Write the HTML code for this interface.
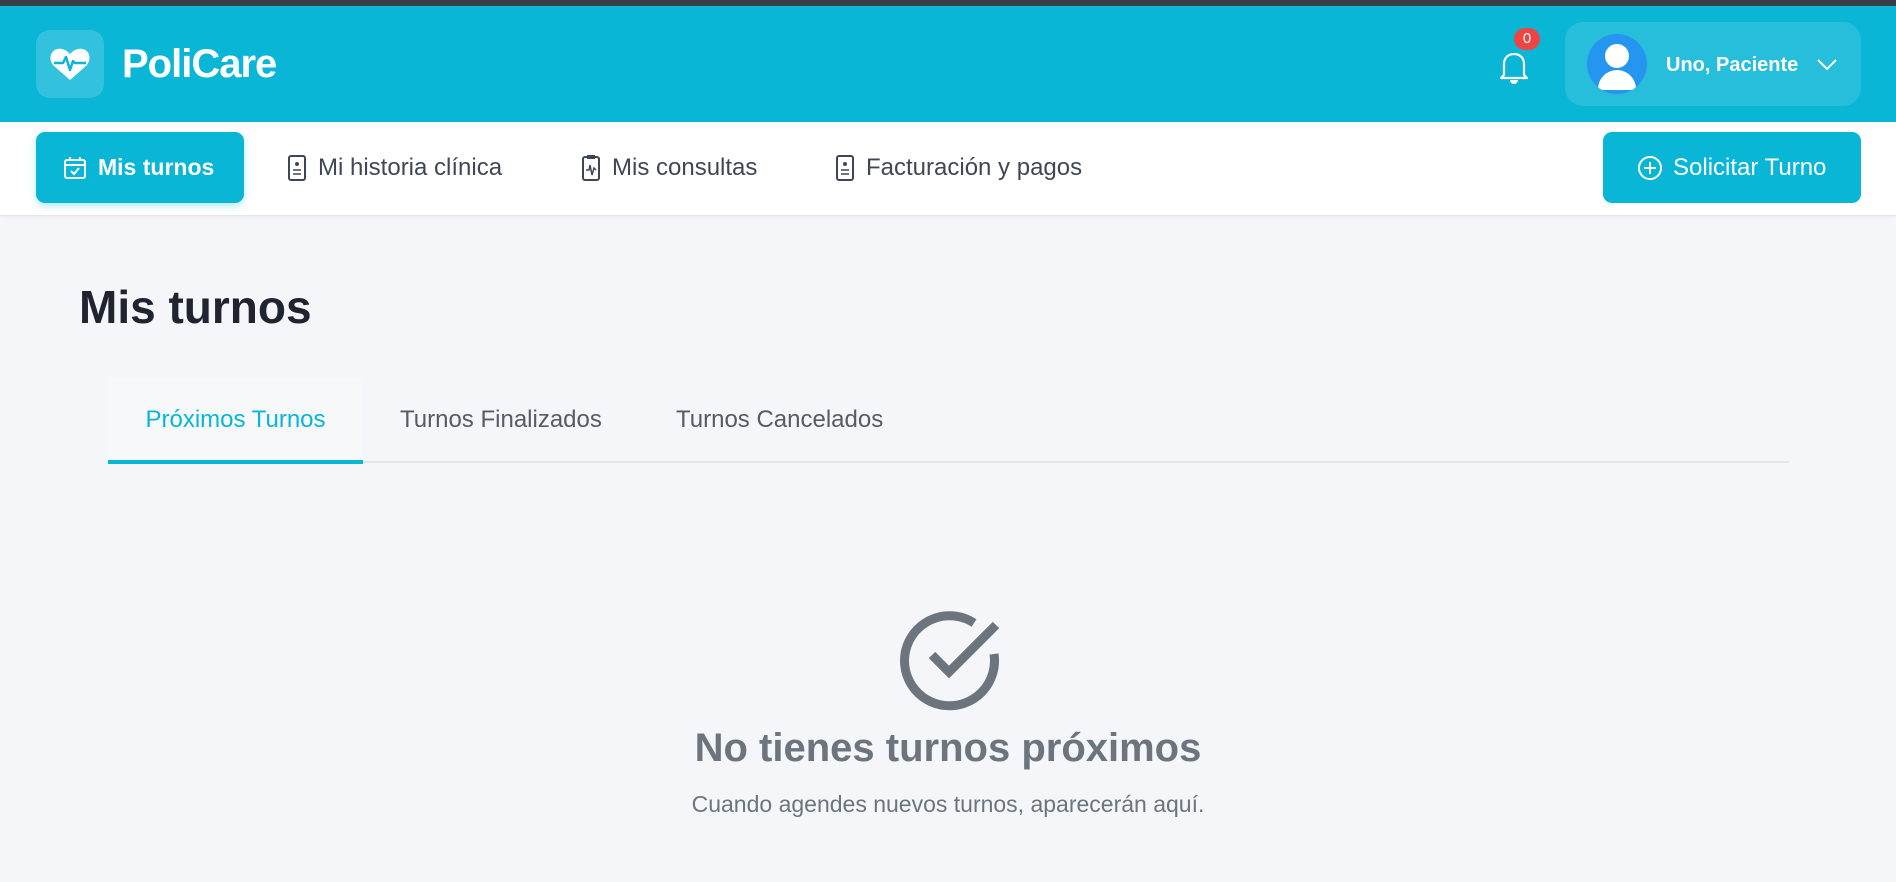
<!DOCTYPE html>
<html><head><meta charset="utf-8"><style>
*{box-sizing:border-box;margin:0;padding:0}
body{width:1896px;height:882px;overflow:hidden;background:#f4f6f9;font-family:"Liberation Sans",sans-serif;position:relative}
.top{position:absolute;left:0;top:0;width:1896px;height:6px;background:#3a3d48}
.hdr{position:absolute;left:0;top:6px;width:1896px;height:116px;background:#09b6d6}
.logo{position:absolute;left:36px;top:24px;width:68px;height:68px;border-radius:14px;background:rgba(255,255,255,.17)}
.brand{position:absolute;left:122px;top:36px;color:#fff;font-size:40px;font-weight:bold;letter-spacing:-1px}
.pill{position:absolute;left:1565px;top:16px;width:296px;height:84px;border-radius:18px;background:rgba(255,255,255,.12)}
.av{position:absolute;left:22px;top:12px;width:60px;height:60px;border-radius:50%;background:#2496f0;overflow:hidden}
.uname{position:absolute;left:101px;top:32px;color:#fff;font-size:20px;font-weight:bold}
.nav{position:absolute;left:0;top:122px;width:1896px;height:94px;background:#fff;border-bottom:1px solid #e3e6ea;box-shadow:0 1px 3px rgba(0,0,0,.04)}
.ni{position:absolute;top:10px;height:71px;display:flex;align-items:center;font-size:24px;color:#3f4756}
.ni svg{margin-right:10px}
.act{left:36px;width:208px;background:#09b6d6;border-radius:9px;color:#fff;font-weight:bold;padding-left:26px;font-size:23px;box-shadow:0 3px 8px rgba(9,182,214,.3)}
.sol{position:absolute;left:1603px;top:10px;width:258px;height:71px;background:#09b6d6;border-radius:9px;color:#fff;font-size:24px;display:flex;align-items:center;padding-left:34px}
h1{position:absolute;left:79px;top:280px;font-size:46px;font-weight:600;color:#1f2430}
.tabs{position:absolute;left:108px;top:377px;width:1681px;height:86px;border-bottom:2px solid #e2e5ea}
.tab{position:absolute;top:0;height:86px;line-height:86px;font-size:24px;color:#555c66}
.tab.a{left:0;width:255px;text-align:center;background:#f7f8fa;color:#09b6d6;border-bottom:4px solid #09b6d6;height:87px}
.emp{position:absolute;left:0;width:1896px;text-align:center;color:#6c757d}
</style></head><body>
<div class="top"></div>
<div class="hdr">
<div class="logo"><svg width="68" height="68" viewBox="0 0 68 68"><path d="M34 50 L18 36 C12 30 14 20 22 19 C27 18 31 21 34 24 C37 21 41 18 46 19 C54 20 56 30 50 36 Z" fill="#fff"/><path d="M18 33 H27 L30 27 L34 40 L37 31 L39 33 H50" fill="none" stroke="#09b6d6" stroke-width="2.5" stroke-linejoin="round"/></svg></div>
<div class="brand">PoliCare</div>
<svg style="position:absolute;left:1498px;top:42px" width="32" height="36" viewBox="0 0 32 36"><path d="M6 27 V16 C6 10 10 6 16 6 C22 6 26 10 26 16 V27 L29 30 H3 Z" fill="none" stroke="#fff" stroke-width="2.2" stroke-linejoin="round"/><path d="M12 32 H20 A4 4 0 0 1 12 32Z" fill="#fff"/></svg>
<div style="position:absolute;left:1514px;top:22px;width:26px;height:22px;border-radius:11px;background:#ef4444;color:#fff;font-size:15px;text-align:center;line-height:22px">0</div>
<div class="pill"><div class="av"><div style="position:absolute;left:18px;top:10px;width:24px;height:24px;border-radius:50%;background:#fff"></div><div style="position:absolute;left:11px;top:36px;width:38px;height:34px;border-radius:19px 19px 2px 2px;background:#fff;clip-path:inset(0 0 14px 0)"></div></div><div class="uname">Uno, Paciente</div><svg style="position:absolute;left:251px;top:36px" width="22" height="14" viewBox="0 0 22 14"><path d="M2 2 L11 11 L20 2" fill="none" stroke="#fff" stroke-width="2"/></svg></div>
</div>
<div class="nav">
<div class="ni act"><svg width="26" height="26" viewBox="0 0 26 26"><rect x="3" y="5" width="20" height="18" rx="2" fill="none" stroke="#fff" stroke-width="2"/><path d="M3 10 H23 M8 2 V6 M18 2 V6" stroke="#fff" stroke-width="2"/><path d="M9 16 L12 19 L17 13" fill="none" stroke="#fff" stroke-width="2"/></svg>Mis turnos</div>
<div class="ni" style="left:286px"><svg width="22" height="28" viewBox="0 0 22 28"><rect x="3" y="2" width="16" height="24" rx="2" fill="none" stroke="#3f4756" stroke-width="2"/><circle cx="11" cy="10" r="2" fill="#3f4756"/><path d="M7 16H15M7 20H15" stroke="#3f4756" stroke-width="1.6"/></svg>Mi historia clínica</div>
<div class="ni" style="left:580px"><svg width="22" height="28" viewBox="0 0 22 28"><rect x="3" y="3" width="16" height="23" rx="2" fill="none" stroke="#3f4756" stroke-width="2"/><rect x="7" y="1" width="8" height="4" fill="#3f4756"/><path d="M6 16 L9 16 L10 11 L12 21 L14 14 L16 16" fill="none" stroke="#3f4756" stroke-width="1.5"/></svg>Mis consultas</div>
<div class="ni" style="left:834px"><svg width="22" height="28" viewBox="0 0 22 28"><rect x="3" y="2" width="16" height="24" rx="2" fill="none" stroke="#3f4756" stroke-width="2"/><circle cx="11" cy="10" r="2" fill="#3f4756"/><path d="M7 16H15M7 20H15" stroke="#3f4756" stroke-width="1.6"/></svg>Facturación y pagos</div>
<div class="sol"><svg width="26" height="26" viewBox="0 0 26 26" style="margin-right:10px"><circle cx="13" cy="13" r="11" fill="none" stroke="#fff" stroke-width="2"/><path d="M13 7V19M7 13H19" stroke="#fff" stroke-width="2"/></svg>Solicitar Turno</div>
</div>
<h1>Mis turnos</h1>
<div class="tabs">
<div class="tab a">Próximos Turnos</div>
<div class="tab" style="left:292px">Turnos Finalizados</div>
<div class="tab" style="left:568px">Turnos Cancelados</div>
</div>
<svg style="position:absolute;left:890px;top:600px" width="120" height="120" viewBox="0 0 120 120"><path d="M104 54 A45 45 0 1 1 84 23" fill="none" stroke="#6c757d" stroke-width="9"/><path d="M42 55 L59 72 L106 25" fill="none" stroke="#6c757d" stroke-width="9"/></svg>
<div class="emp" style="top:726px;font-size:40px;font-weight:600">No tienes turnos próximos</div>
<div class="emp" style="top:791px;font-size:23px">Cuando agendes nuevos turnos, aparecerán aquí.</div>
</body></html>
